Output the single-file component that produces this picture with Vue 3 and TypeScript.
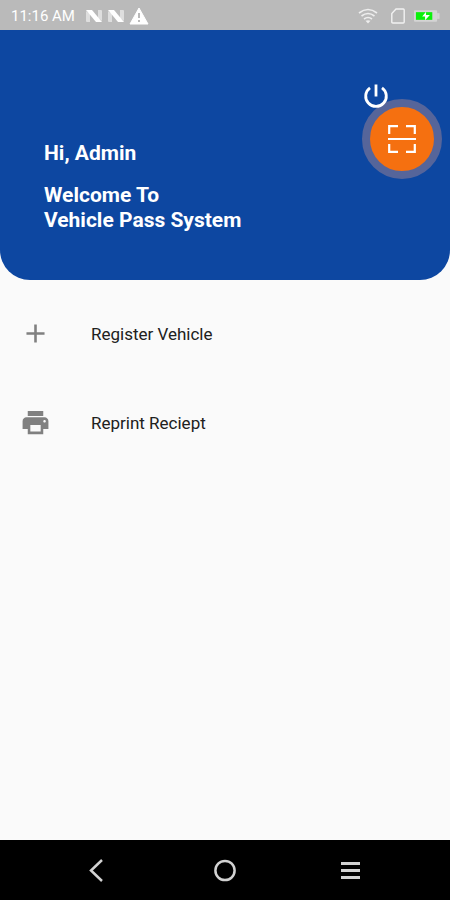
<script setup lang="ts">
interface MenuItem {
  label: string
  icon: string
}

const menu: MenuItem[] = [
  { label: 'Register Vehicle', icon: 'M19 13h-6v6h-2v-6H5v-2h6V5h2v6h6v2z' },
  {
    label: 'Reprint Reciept',
    icon: 'M19 8H5c-1.66 0-3 1.34-3 3v6h4v4h12v-4h4v-6c0-1.66-1.34-3-3-3zm-3 11H8v-5h8v5zm3-7c-.55 0-1-.45-1-1s.45-1 1-1 1 .45 1 1-.45 1-1 1zm-1-9H6v4h12V3z',
  },
]
</script>

<template>
  <div class="screen">
    <div class="status">
      <span class="time">11:16 AM</span>
      <svg v-for="n in 2" :key="n" class="notice" viewBox="0 0 18 16" aria-hidden="true">
        <path d="M1 3l4 3v8H2Q1 14 1 13zM17 13l-4-3V2h3Q17 2 17 3z" fill="#dedede" />
        <path d="M1 2h6l10 12h-6z" fill="#fff" />
      </svg>
      <svg class="warning" viewBox="0 0 20 18" aria-hidden="true">
        <path d="M10 1l9 16H1z" fill="#fff" stroke="#fff" stroke-linejoin="round" />
        <path d="M10 6v5M10 13v2" stroke="#bababa" stroke-width="2" />
      </svg>
      <div class="system">
        <svg class="wifi" viewBox="0 0 20 16" fill="none" stroke="#eee" stroke-width="1.6" aria-hidden="true">
          <path d="M1 5Q10-2 19 5M3.500 8Q10 3 16.500 8M6 11Q10 8 14 11" />
          <path d="M7.500 12.800Q10 11.500 12.500 12.800L10 15.500z" fill="#eee" stroke="none" />
        </svg>
        <svg class="sim" viewBox="0 0 16 16" fill="none" stroke="#f2f2f2" stroke-width="1.4" aria-hidden="true">
          <path d="M6 1h7.200q1 0 1 1v12q0 1-1 1H2.800q-1 0-1-1V5.500z" />
        </svg>
        <svg class="battery" viewBox="0 0 27 12" aria-hidden="true">
          <rect width="24" height="12" rx="1" fill="#d4d4d4" />
          <path d="M24 3h2.500v6H24z" fill="#d4d4d4" />
          <path d="M2 2h17v8H2z" fill="#0bf00b" />
          <path d="M12.500 1.500L8.500 6.500h3v4l5-5.500h-4z" fill="#fff" />
        </svg>
      </div>
    </div>

    <header class="hero">
      <button class="power" type="button" aria-label="Log out">
        <svg viewBox="0 0 28 28" fill="none" stroke="#fff" stroke-width="2.800" aria-hidden="true">
          <path d="M14 2.500v12M8 5.800a10.300 10.300 0 1 0 12 0" />
        </svg>
      </button>
      <h1 class="greeting">Hi, Admin</h1>
      <p class="welcome">Welcome To<br />Vehicle Pass System</p>
      <button class="scan" type="button" aria-label="Scan">
        <svg viewBox="0 0 30 30" fill="none" stroke="#fff" stroke-width="2.200" aria-hidden="true">
          <path d="M2.200 10V2.200H11M19 2.200h8.800V10M2.200 20v7.800H11M19 27.800h8.800V20M1 15h28" />
        </svg>
      </button>
    </header>

    <main class="menu">
      <button v-for="item in menu" :key="item.label" class="item" type="button">
        <svg class="glyph" viewBox="0 0 24 24" aria-hidden="true"><path :d="item.icon" /></svg>
        <span>{{ item.label }}</span>
      </button>
    </main>

    <nav class="navbar">
      <button type="button" aria-label="Back">
        <svg viewBox="0 0 32 32"><path d="M18 6L7 16.500L18 27" /></svg>
      </button>
      <button type="button" aria-label="Home">
        <svg viewBox="0 0 32 32"><circle cx="16" cy="16.500" r="9.600" /></svg>
      </button>
      <button type="button" aria-label="Recent apps">
        <svg viewBox="0 0 32 32"><path class="bars" d="M7 9.500h19M7 16.500h19M7 23.500h19" /></svg>
      </button>
    </nav>
  </div>
</template>

<style>
body {
  margin: 0;
}
</style>

<style scoped>
.screen {
  display: flex;
  flex-direction: column;
  min-height: 100vh;
  background: #fafafa;
  font-family: Roboto, 'Liberation Sans', sans-serif;
}

button {
  border: 0;
  padding: 0;
  background: none;
  font: inherit;
  color: inherit;
  cursor: pointer;
}

svg {
  display: block;
}

.status {
  display: flex;
  align-items: center;
  height: 30px;
  padding: 1px 10px 0 11px;
  box-sizing: border-box;
  background: #bababa;
  color: #fff;
}

.time {
  margin-right: 10px;
  font-size: 15px;
  line-height: 20px;
}

.notice {
  width: 18px;
  height: 16px;
  margin-right: 4px;
}

.warning {
  width: 20px;
  height: 18px;
}

.system {
  display: flex;
  align-items: center;
  gap: 12px;
  margin-left: auto;
}

.wifi {
  width: 20px;
  height: 16px;
}

.sim {
  width: 16px;
  height: 16px;
}

.battery {
  width: 26px;
  height: 12px;
  margin-left: -4px;
}

.hero {
  position: relative;
  display: flex;
  flex-direction: column;
  padding: 52px 44px 47px;
  border-radius: 0 0 30px 30px;
  background: #0d47a1;
  color: #fff;
}

.power {
  z-index: 1;
  align-self: flex-end;
  width: 28px;
  height: 28px;
  margin-right: 16px;
}

.greeting,
.welcome {
  margin: 0;
  font-size: 21px;
  font-weight: 700;
  line-height: 25px;
}

.greeting {
  margin-top: 31px;
}

.welcome {
  margin-top: 17px;
}

.scan {
  position: absolute;
  top: 69px;
  right: 8px;
  display: grid;
  place-items: center;
  width: 80px;
  height: 80px;
  border: 8px solid #56659a;
  border-radius: 50%;
  background: #f57010;
}

.scan svg {
  width: 30px;
  height: 30px;
}

.menu {
  display: flex;
  flex: 1;
  flex-direction: column;
  padding-top: 9px;
}

.item {
  display: flex;
  align-items: center;
  gap: 40px;
  height: 89px;
  padding: 0 20px;
  color: #202020;
  font-size: 17px;
  line-height: 24px;
  text-align: left;
}

.glyph {
  width: 31px;
  height: 31px;
  fill: #808080;
}

.navbar {
  display: grid;
  grid-template-columns: repeat(3, 1fr);
  height: 60px;
  padding: 0 37px;
  box-sizing: border-box;
  background: #000;
}

.navbar button {
  display: grid;
  place-items: center;
}

.navbar svg {
  width: 32px;
  height: 32px;
  fill: none;
  stroke: #d2d2d2;
  stroke-width: 2.500;
}

.navbar .bars {
  stroke-width: 3;
}
</style>
